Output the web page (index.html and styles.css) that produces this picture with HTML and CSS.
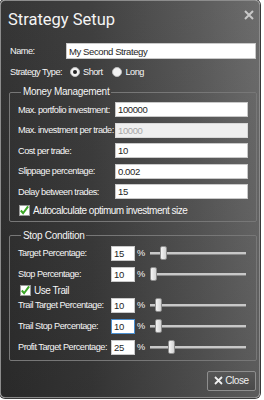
FILE: index.html
```html
<!DOCTYPE html>
<html>
<head>
<meta charset="utf-8">
<link rel="stylesheet" href="styles.css">
</head>
<body>
<div class="window">
  <div class="titlebar">
    <h1 class="title">Strategy Setup</h1>
    <svg class="xicon" width="10" height="10" viewBox="0 0 10 10"><path d="M1 1L9 9M9 1L1 9" stroke="#c8c8c8" stroke-width="2"/></svg>
  </div>
  <div class="form">
    <div class="toprow">
      <span class="lbl name-lbl">Name:</span>
      <input class="inp name-inp" value="My Second Strategy">
    </div>
    <div class="toprow type-row">
      <span class="lbl type-lbl">Strategy Type:</span>
      <span class="radio on"></span><span class="lbl">Short</span>
      <span class="radio second"></span><span class="lbl">Long</span>
    </div>
    <fieldset class="group money">
      <legend>Money Management</legend>
      <div class="mrow"><span class="lbl m-lbl">Max. portfolio investment:</span><input class="inp m-inp" value="100000"></div>
      <div class="mrow"><span class="lbl m-lbl">Max. investment per trade:</span><input class="inp m-inp dis" value="10000"></div>
      <div class="mrow"><span class="lbl m-lbl">Cost per trade:</span><input class="inp m-inp" value="10"></div>
      <div class="mrow"><span class="lbl m-lbl">Slippage percentage:</span><input class="inp m-inp" value="0.002"></div>
      <div class="mrow"><span class="lbl m-lbl">Delay between trades:</span><input class="inp m-inp" value="15"></div>
      <div class="chkrow auto"><span class="chk"><svg width="11" height="11" viewBox="0 0 11 11"><path d="M2 5.5L4.5 8.5L10 1" fill="none" stroke="#3aa626" stroke-width="2.2"/></svg></span><span class="lbl big">Autocalculate optimum investment size</span></div>
    </fieldset>
    <fieldset class="group stop">
      <legend>Stop Condition</legend>
      <div class="srow"><span class="lbl s-lbl">Target Percentage:</span><input class="inp s-inp" value="15"><span class="lbl pct">%</span><div class="slider"><div class="track"></div><div class="thumb" style="left:10px"></div></div></div>
      <div class="srow"><span class="lbl s-lbl">Stop Percentage:</span><input class="inp s-inp" value="10"><span class="lbl pct">%</span><div class="slider"><div class="track"></div><div class="thumb" style="left:0px"></div></div></div>
      <div class="chkrow trail"><span class="chk"><svg width="11" height="11" viewBox="0 0 11 11"><path d="M2 5.5L4.5 8.5L10 1" fill="none" stroke="#3aa626" stroke-width="2.2"/></svg></span><span class="lbl big">Use Trail</span></div>
      <div class="srow"><span class="lbl s-lbl">Trail Target Percentage:</span><input class="inp s-inp" value="10"><span class="lbl pct">%</span><div class="slider"><div class="track"></div><div class="thumb" style="left:5px"></div></div></div>
      <div class="srow"><span class="lbl s-lbl">Trail Stop Percentage:</span><input class="inp s-inp focus" value="10"><span class="lbl pct">%</span><div class="slider"><div class="track"></div><div class="thumb" style="left:5px"></div></div></div>
      <div class="srow last"><span class="lbl s-lbl">Profit Target Percentage:</span><input class="inp s-inp" value="25"><span class="lbl pct">%</span><div class="slider"><div class="track"></div><div class="thumb" style="left:18px"></div></div></div>
    </fieldset>
    <div class="footer">
      <button class="closebtn"><svg width="9" height="9" viewBox="0 0 9 9"><path d="M1 1L8 8M8 1L1 8" stroke="#f0f0f0" stroke-width="1.8"/></svg><span>Close</span></button>
    </div>
  </div>
</div>
</body>
</html>
```
FILE: styles.css
```css
html, body {
  margin: 0;
  padding: 0;
  background: #ffffff;
}
body {
  width: 264px;
  height: 400px;
  overflow: hidden;
  font-family: "Liberation Sans", Arial, sans-serif;
}
.window {
  box-sizing: border-box;
  width: 260px;
  height: 398px;
  border: 1px solid #8c8c8c;
  border-radius: 5px;
  box-shadow: 0 0 0 1px #3a3a3a;
  background:
    linear-gradient(to bottom, rgba(255,255,255,0.03) 0%, rgba(0,0,0,0.12) 100%),
    linear-gradient(to right, #2f2f2f 0%, #3a3a3a 35%, #555555 75%, #686868 100%);
  display: flex;
  flex-direction: column;
  overflow: hidden;
}
.window > *, .form > * {
  flex: none;
}
.titlebar {
  display: flex;
  justify-content: space-between;
  align-items: flex-start;
  padding: 9px 4px 0 7px;
  height: 42px;
  box-sizing: border-box;
}
.title {
  margin: 0;
  font-family: Roboto, "Liberation Sans", sans-serif;
  font-weight: 400;
  font-size: 16.5px;
  line-height: 19px;
  color: #f4f4f4;
}
.xicon {
  margin-top: 0px;
  margin-right: 1px;
}
.form {
  padding: 0 2px 0 8px;
  display: flex;
  flex-direction: column;
}
.lbl {
  color: #f6f6f6;
  font-size: 9.2px;
  letter-spacing: -0.5px;
  line-height: 12px;
  white-space: nowrap;
}
.toprow {
  display: flex;
  align-items: center;
  height: 16px;
}
.name-lbl {
  width: 56px;
  padding-left: 1px;
}
.inp {
  box-sizing: border-box;
  border: 1px solid #c9c9c9;
  background: #ffffff;
  color: #1e1e1e;
  font-family: "Liberation Sans", Arial, sans-serif;
  font-size: 9.5px;
  letter-spacing: -0.4px;
  height: 16px;
  padding: 0 2px;
  margin: 0;
  outline: none;
}
.name-inp {
  width: 190px;
}
.type-row {
  margin-top: 6px;
  height: 14px;
  padding-left: 1px;
}
.type-lbl {
  width: 60px;
}
.radio {
  width: 8px;
  height: 8px;
  border-radius: 50%;
  background: #f2f2f2;
  border: 1px solid #bcbcbc;
  margin-right: 3px;
  position: relative;
}
.radio.on::after {
  content: "";
  position: absolute;
  left: 2px;
  top: 2px;
  width: 4px;
  height: 4px;
  border-radius: 50%;
  background: #222;
}
.radio.second {
  margin-left: 10px;
}
.group {
  margin: 7px 0 0 0;
  padding: 4px 7px 4px 8px;
  border: 1px solid #777777;
  border-radius: 2px;
  width: 248px;
  box-sizing: border-box;
}
.group legend {
  color: #f4f4f4;
  font-size: 10px;
  letter-spacing: -0.3px;
  line-height: 12px;
  height: 12px;
  padding: 0 2px;
  margin-left: 3px;
}
.mrow {
  display: flex;
  align-items: center;
  height: 15px;
  margin-bottom: 5.5px;
}
.m-lbl {
  width: 97px;
}
.m-inp {
  width: 133px;
  height: 15px;
}
.dis {
  background: #efefef;
  color: #a8a8a8;
  border-color: #d8d8d8;
}
.chkrow {
  display: flex;
  align-items: center;
  height: 12px;
}
.chk {
  width: 11px;
  height: 11px;
  background: #ffffff;
  border: 1px solid #9a9a9a;
  box-sizing: border-box;
  margin-right: 3px;
  display: flex;
}
.chk svg {
  margin: -1px 0 0 -1px;
}
.big {
  font-size: 10px;
  letter-spacing: -0.5px;
}
.auto {
  margin-top: 1.5px;
  margin-left: 1px;
}
.stop {
  margin-top: 8px;
  padding-bottom: 5px;
}
.srow {
  display: flex;
  align-items: center;
  height: 15px;
  margin-bottom: 6px;
}
.srow.last {
  margin-bottom: 0;
}
.s-lbl {
  width: 93px;
}
.s-inp {
  width: 24px;
  height: 15px;
}
.focus {
  border-color: #4a8fd0;
}
.pct {
  width: 15px;
  padding-left: 2px;
  box-sizing: border-box;
}
.slider {
  position: relative;
  width: 96px;
  height: 15px;
}
.track {
  position: absolute;
  left: 0;
  right: 0;
  top: 6px;
  height: 2px;
  background: #c8c8c8;
  border-bottom: 1px solid #8a8a8a;
}
.thumb {
  position: absolute;
  top: 0;
  width: 7px;
  height: 14px;
  box-sizing: border-box;
  border: 1px solid #8d8d8d;
  border-radius: 2px;
  background: linear-gradient(to right, #f4f4f4, #d4d4d4);
}
.trail {
  margin: -3px 0 1px 2px;
}
.footer {
  display: flex;
  justify-content: flex-end;
  padding-top: 10px;
}
.closebtn {
  width: 49px;
  height: 20px;
  box-sizing: border-box;
  border: 1px solid #8e8e8e;
  border-radius: 2px;
  background: linear-gradient(to bottom, #575757, #494949);
  color: #f0f0f0;
  font-family: "Liberation Sans", Arial, sans-serif;
  font-size: 10px;
  letter-spacing: -0.4px;
  display: flex;
  align-items: center;
  justify-content: center;
  gap: 2px;
  padding: 0;
  margin-right: 1px;
}
```
